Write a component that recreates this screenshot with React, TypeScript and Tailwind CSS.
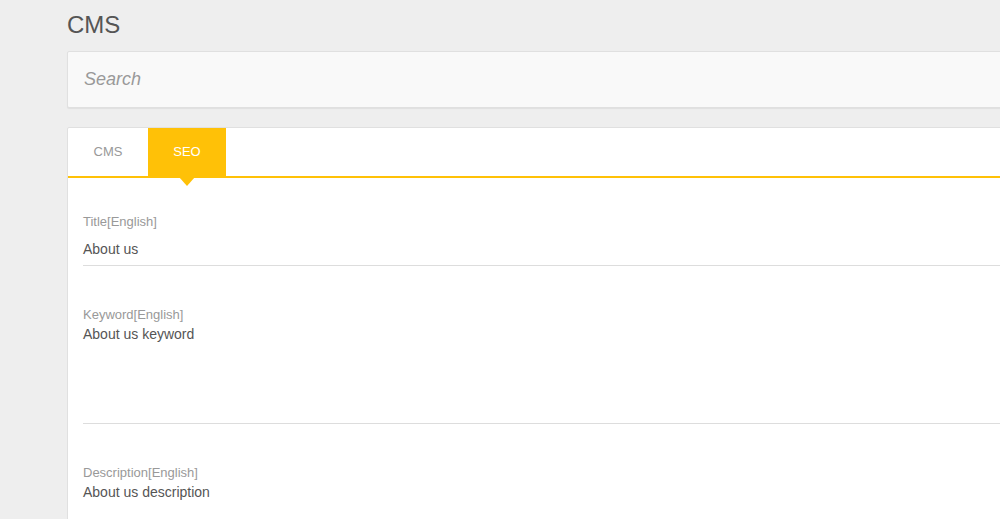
export default function App() {
  return (
    <div
      className="w-[1000px] h-[519px] overflow-hidden bg-[#eeeeee]"
      style={{ fontFamily: '"Liberation Sans", Arial, sans-serif' }}
    >
      <div className="pl-[67px] w-[1150px]">
        <h1 className="pt-[12px] h-[51px] text-[24px] leading-[26px] text-[#555555]">CMS</h1>
        <div className="h-[57px] bg-[#f9f9f9] border border-[#e0e0e0] rounded-[2px] shadow-[0_1px_1px_rgba(0,0,0,0.06)] flex items-center pl-[16px]">
          <span className="italic text-[18px] text-[#999999]">Search</span>
        </div>
        <div className="mt-[19px] bg-white border border-[#e0e0e0] rounded-t-[2px] h-[400px]">
          <div className="relative flex h-[50px] border-b-2 border-[#ffc107]">
            <div className="w-[80px] flex items-center justify-center text-[13px] text-[#999999]">CMS</div>
            <div className="relative w-[78px] flex items-center justify-center text-[13px] text-white bg-[#ffc107]">
              SEO
              <div className="absolute left-1/2 -translate-x-1/2 top-[49px] w-0 h-0 border-l-[8px] border-r-[8px] border-t-[9px] border-l-transparent border-r-transparent border-t-[#ffc107]" />
            </div>
          </div>
          <div className="pl-[15px]">
            <div className="pt-[36px]">
              <div className="text-[13px] leading-[15px] text-[#999999]">Title[English]</div>
              <div className="mt-[12px] pb-[8px] border-b border-[#dddddd] text-[14px] leading-[16px] text-[#555555]">About us</div>
            </div>
            <div className="pt-[41px]">
              <div className="text-[13px] leading-[15px] text-[#999999]">Keyword[English]</div>
              <div className="mt-[4px] h-[98px] border-b border-[#dddddd] text-[14px] leading-[16px] text-[#555555]">About us keyword</div>
            </div>
            <div className="pt-[41px]">
              <div className="text-[13px] leading-[15px] text-[#999999]">Description[English]</div>
              <div className="mt-[4px] h-[97px] text-[14px] leading-[16px] text-[#555555]">About us description</div>
            </div>
          </div>
        </div>
      </div>
    </div>
  );
}
